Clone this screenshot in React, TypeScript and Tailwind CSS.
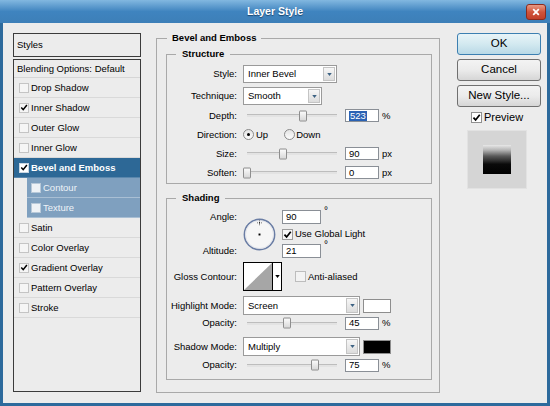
import React from 'react';

type Effect = { name: string; on?: boolean; active?: boolean; sub?: boolean };

const effects: Effect[] = [
  { name: 'Drop Shadow' },
  { name: 'Inner Shadow', on: true },
  { name: 'Outer Glow' },
  { name: 'Inner Glow' },
  { name: 'Bevel and Emboss', on: true, active: true },
  { name: 'Contour', sub: true },
  { name: 'Texture', sub: true },
  { name: 'Satin' },
  { name: 'Color Overlay' },
  { name: 'Gradient Overlay', on: true },
  { name: 'Pattern Overlay' },
  { name: 'Stroke' },
];

function Check({ on, className = '' }: { on?: boolean; className?: string }) {
  return (
    <span className={`flex items-center justify-center shrink-0 border ${className}`}>
      {on && (
        <svg viewBox="0 0 10 10" className="w-[9px] h-[9px]">
          <path d="M1.6 5.1 L4 7.7 L8.6 1.9" fill="none" stroke="#000" strokeWidth="1.9" />
        </svg>
      )}
    </span>
  );
}

function Select({ value, className }: { value: string; className: string }) {
  return (
    <div className={`h-full flex border border-[#9a9a9a] bg-white ${className}`}>
      <span className="flex-1 flex items-center pl-[4px]">{value}</span>
      <span className="w-[12px] m-[1px] flex items-center justify-center border border-[#c4c4c4] bg-gradient-to-b from-[#f7f7f7] to-[#dcdcdc]">
        <svg viewBox="0 0 6 4" className="w-[5px] h-[3px]">
          <path d="M0 0 H6 L3 4 Z" fill="#3d6283" />
        </svg>
      </span>
    </div>
  );
}

function Slider({ pos }: { pos: number }) {
  return (
    <div className="w-[102px] h-full relative flex items-center pl-[4px] shrink-0">
      <div className="w-[90px] h-[3px] border-t border-[#bdbdbd] bg-[#e3e3e3]" />
      <span
        className="absolute top-1/2 -translate-y-1/2 w-[8px] h-[11px] border border-[#8e8e8e] rounded-[1px] bg-gradient-to-b from-[#fbfbfb] to-[#d8d8d8]"
        style={{ left: pos }}
      />
    </div>
  );
}

function Num({ value, selected, className = 'w-[34px] h-[13px]' }: { value: string; selected?: boolean; className?: string }) {
  return (
    <span className={`flex items-center border border-[#8a8f96] bg-white pl-[3px] shrink-0 ${className}`}>
      {selected ? <span className="bg-[#2a62b4] text-white px-[1px] leading-[10px]">{value}</span> : value}
    </span>
  );
}

function Row({ label, className = '', children }: { label: string; className?: string; children?: React.ReactNode }) {
  return (
    <div className={`flex items-center ${className}`}>
      <span className="w-[70px] text-right shrink-0">{label}</span>
      <div className="ml-[6px] h-full flex items-center">{children}</div>
    </div>
  );
}

function Radio({ on }: { on?: boolean }) {
  return (
    <span className="w-[11px] h-[11px] rounded-full border border-[#8a8a8a] bg-gradient-to-b from-[#e4e4e4] to-[#fcfcfc] flex items-center justify-center shrink-0">
      {on && <span className="w-[3px] h-[3px] rounded-full bg-black" />}
    </span>
  );
}

function Button({ label, primary }: { label: string; primary?: boolean }) {
  return (
    <button
      className={`h-[22px] w-full rounded-[3px] border text-[11.5px] ${
        primary
          ? 'border-[#3c7fb1] bg-gradient-to-b from-[#e8f4f8] via-[#d3e9f0] to-[#b9d9e6]'
          : 'border-[#707070] bg-gradient-to-b from-[#f3f3f3] via-[#ebebeb] to-[#d6d6d6]'
      }`}
    >
      {label}
    </button>
  );
}

export default function App() {
  return (
    <div className="w-[550px] h-[406px] flex flex-col bg-[#2d6a9c] font-['Liberation_Sans',Arial,sans-serif] text-black text-[9.5px] leading-none">
      <div className="h-[23px] shrink-0 grid grid-cols-[1fr_auto_1fr] items-center bg-gradient-to-b from-[#82b8e0] via-[#3f84bf] to-[#3d7fb8]">
        <span />
        <span className="text-white font-bold text-[10.5px] [text-shadow:0_1px_1px_#1b4770]">Layer Style</span>
        <span className="justify-self-end mr-[4px] w-[20px] h-[16px] rounded-[3px] border border-[#8c2b1e] bg-gradient-to-b from-[#e79a85] via-[#d0543c] to-[#c2402a] flex items-center justify-center">
          <svg viewBox="0 0 10 10" className="w-[8px] h-[8px]">
            <path d="M1.5 1.5 L8.5 8.5 M8.5 1.5 L1.5 8.5" stroke="#fff" strokeWidth="2.2" />
          </svg>
        </span>
      </div>

      <div className="flex-1 mx-[3px] mb-[3px] bg-[#ececec] flex items-start pl-[10px] pt-[10px]">
        {/* effects list */}
        <div className="w-[128px] h-[359px] flex flex-col gap-[2px] shrink-0">
          <div className="h-[24px] border border-[#3b3b3b] flex items-center pl-[3px]">Styles</div>
          <div className="flex-1 border border-[#3b3b3b] flex flex-col">
            <div className="h-[18px] flex items-center pl-[3px] border-b border-[#d6d6d6]">Blending Options: Default</div>
            {effects.map((e) =>
              e.sub ? (
                <div key={e.name} className="h-[20px] flex pl-[13px]">
                  <div className="flex-1 flex items-center pl-[4px] bg-[#7fa0bf] text-[#eef3f8] border-b border-[#a9bfd4]">
                    <Check className="w-[10px] h-[10px] border-[#b8c9d9] bg-[#eef2f6]" />
                    <span className="ml-[2px]">{e.name}</span>
                  </div>
                </div>
              ) : e.active ? (
                <div key={e.name} className="h-[20px] flex items-center pl-[5px] bg-[#2d6896] text-white font-bold border-b border-[#5a87ad]">
                  <Check on className="w-[10px] h-[10px] border-[#c9d6e2] bg-white" />
                  <span className="ml-[2px]">{e.name}</span>
                </div>
              ) : (
                <div key={e.name} className="h-[20px] flex items-center pl-[5px] border-b border-[#d9d9d9]">
                  <Check on={e.on} className="w-[10px] h-[10px] border-[#c4c4c4] bg-[#f5f5f5]" />
                  <span className="ml-[2px]">{e.name}</span>
                </div>
              )
            )}
          </div>
        </div>

        {/* settings */}
        <fieldset className="ml-[15px] -mt-[1px] w-[284px] h-[361px] border border-[#a9a9a9] shrink-0">
          <legend className="ml-[10px] px-[5px] font-bold leading-[12px]">Bevel and Emboss</legend>
          <div className="pl-[9px] pr-[7px] pt-[4px]">
            <fieldset className="h-[136px] border border-[#a9a9a9]">
              <legend className="ml-[9px] px-[6px] font-bold leading-[12px]">Structure</legend>
              <div className="pt-[5px] flex flex-col">
                <Row label="Style:" className="h-[18px]">
                  <Select value="Inner Bevel" className="w-[94px]" />
                </Row>
                <Row label="Technique:" className="h-[18px] mt-[4px]">
                  <Select value="Smooth" className="w-[79px]" />
                </Row>
                <Row label="Depth:" className="h-[19px] mt-[1px]">
                  <Slider pos={56} />
                  <Num value="523" selected />
                  <span className="ml-[3px]">%</span>
                </Row>
                <Row label="Direction:" className="h-[19px]">
                  <Radio on />
                  <span className="ml-[2px]">Up</span>
                  <span className="ml-[16px]">
                    <Radio />
                  </span>
                  <span className="ml-[1px]">Down</span>
                </Row>
                <Row label="Size:" className="h-[19px]">
                  <Slider pos={36} />
                  <Num value="90" />
                  <span className="ml-[3px]">px</span>
                </Row>
                <Row label="Soften:" className="h-[19px]">
                  <Slider pos={0} />
                  <Num value="0" />
                  <span className="ml-[3px]">px</span>
                </Row>
              </div>
            </fieldset>

            <fieldset className="mt-[8px] h-[188px] border border-[#a9a9a9]">
              <legend className="ml-[9px] px-[6px] font-bold leading-[12px]">Shading</legend>
              <div className="flex flex-col">
                <div className="flex pt-[6px]">
                  <div className="w-[70px] flex flex-col items-end shrink-0">
                    <span className="h-[14px] flex items-center">Angle:</span>
                    <span className="h-[14px] mt-[20px] flex items-center">Altitude:</span>
                  </div>
                  <svg viewBox="0 0 34 34" className="ml-[6px] mt-[8px] w-[33px] h-[33px] shrink-0">
                    <circle cx="17" cy="17" r="15.6" fill="#f6f6f6" stroke="#6a7da4" strokeWidth="1.6" />
                    <circle cx="17" cy="17" r="14.4" fill="none" stroke="#dcdfe6" strokeWidth="0.8" />
                    <rect x="16" y="16" width="2" height="2" fill="#000" />
                    <path d="M17 2.5 V7.5 M14.5 5 H19.5" stroke="#444" strokeWidth="0.8" strokeDasharray="1 1" />
                    <rect x="16.5" y="4.5" width="1" height="1" fill="#000" />
                  </svg>
                  <div className="ml-[6px] flex flex-col">
                    <div className="flex h-[14px]">
                      <Num value="90" className="w-[39px] h-[14px]" />
                      <span className="ml-[3px] -mt-[4px] text-[10px]">°</span>
                    </div>
                    <div className="flex items-center mt-[5px] h-[10px]">
                      <Check on className="w-[11px] h-[11px] border-[#9c9c9c] bg-[#f7f7f7]" />
                      <span className="ml-[2px]">Use Global Light</span>
                    </div>
                    <div className="flex h-[14px] mt-[5px]">
                      <Num value="21" className="w-[39px] h-[14px]" />
                      <span className="ml-[3px] -mt-[4px] text-[10px]">°</span>
                    </div>
                  </div>
                </div>

                <Row label="Gloss Contour:" className="h-[29px] mt-[4px]">
                  <div className="h-full flex border border-black bg-white">
                    <svg viewBox="0 0 28 27" preserveAspectRatio="none" className="w-[28px] h-full">
                      <polygon points="0,27 28,0 28,27" fill="#a6a6a6" />
                    </svg>
                    <span className="w-[9px] border-l border-black flex items-center justify-center">
                      <svg viewBox="0 0 6 4" className="w-[5px] h-[3px]">
                        <path d="M0 0 H6 L3 4 Z" fill="#000" />
                      </svg>
                    </span>
                  </div>
                  <Check className="ml-[13px] w-[11px] h-[11px] border-[#bdbdbd] bg-[#f3f3f3]" />
                  <span className="ml-[2px]">Anti-aliased</span>
                </Row>

                <Row label="Highlight Mode:" className="h-[19px] mt-[5px]">
                  <Select value="Screen" className="w-[117px]" />
                  <span className="ml-[3px] w-[28px] h-[14px] border border-[#8e8e8e] bg-white" />
                </Row>
                <Row label="Opacity:" className="h-[14px] mt-[1px]">
                  <Slider pos={40} />
                  <Num value="45" />
                  <span className="ml-[3px]">%</span>
                </Row>
                <Row label="Shadow Mode:" className="h-[19px] mt-[7px]">
                  <Select value="Multiply" className="w-[117px]" />
                  <span className="ml-[3px] w-[28px] h-[14px] border border-[#8e8e8e] bg-black" />
                </Row>
                <Row label="Opacity:" className="h-[14px] mt-[2px]">
                  <Slider pos={68} />
                  <Num value="75" />
                  <span className="ml-[3px]">%</span>
                </Row>
              </div>
            </fieldset>
          </div>
        </fieldset>

        {/* buttons */}
        <div className="ml-[17px] w-[84px] flex flex-col shrink-0">
          <Button label="OK" primary />
          <div className="mt-[4px]">
            <Button label="Cancel" />
          </div>
          <div className="mt-[4px]">
            <Button label="New Style..." />
          </div>
          <div className="mt-[4px] h-[12px] flex items-center pl-[14px] text-[11px]">
            <Check on className="w-[11px] h-[11px] border-[#8f8f8f] bg-white" />
            <span className="ml-[2px]">Preview</span>
          </div>
          <div className="mt-[7px] ml-[10px] w-[60px] h-[59px] bg-[#d5d5d5] border border-[#e2e2e2] pl-[15px] pt-[14px]">
            <div className="w-[28px] h-[29px] bg-[linear-gradient(to_bottom,#e8e8e8_0%,#b3b3b3_18%,#5a5a5a_38%,#2c2c2c_55%,#0a0a0a_66%,#000_100%)]" />
          </div>
        </div>
      </div>
    </div>
  );
}
